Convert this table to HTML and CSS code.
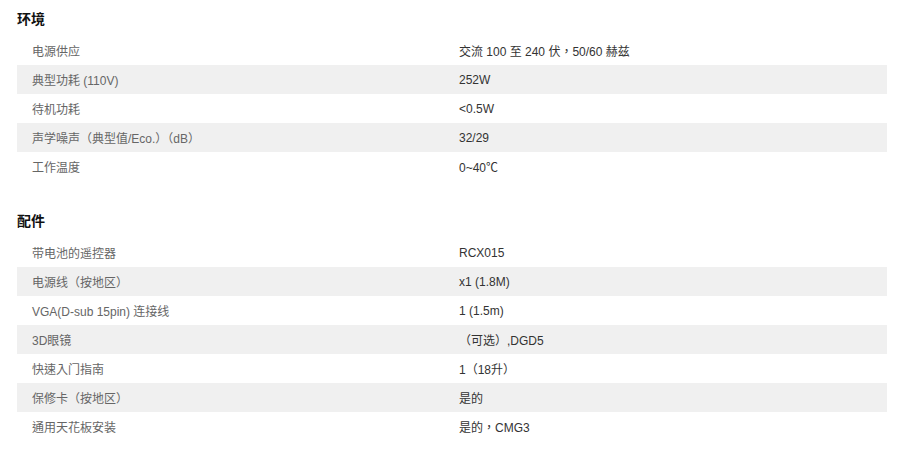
FILE: index.html
```html
<!DOCTYPE html>
<html lang="zh-TW">
<head>
<meta charset="utf-8">
<link rel="stylesheet" href="styles.css">
</head>
<body>
<div class="page">
  <section class="spec">
    <h2 class="spec-title">环境</h2>
    <div class="spec-table">
      <div class="row"><div class="label">电源供应</div><div class="value">交流 100 至 240 伏，50/60 赫兹</div></div>
      <div class="row"><div class="label">典型功耗 (110V)</div><div class="value">252W</div></div>
      <div class="row"><div class="label">待机功耗</div><div class="value">&lt;0.5W</div></div>
      <div class="row"><div class="label">声学噪声（典型值/Eco.）（dB）</div><div class="value">32/29</div></div>
      <div class="row"><div class="label">工作温度</div><div class="value">0~40℃</div></div>
    </div>
  </section>
  <section class="spec spec-next">
    <h2 class="spec-title">配件</h2>
    <div class="spec-table">
      <div class="row"><div class="label">带电池的遥控器</div><div class="value">RCX015</div></div>
      <div class="row"><div class="label">电源线（按地区）</div><div class="value">x1 (1.8M)</div></div>
      <div class="row"><div class="label">VGA(D-sub 15pin) 连接线</div><div class="value">1 (1.5m)</div></div>
      <div class="row"><div class="label">3D眼镜</div><div class="value">（可选）,DGD5</div></div>
      <div class="row"><div class="label">快速入门指南</div><div class="value">1（18升）</div></div>
      <div class="row"><div class="label">保修卡（按地区）</div><div class="value">是的</div></div>
      <div class="row"><div class="label">通用天花板安装</div><div class="value">是的，CMG3</div></div>
    </div>
  </section>
</div>
</body>
</html>
```

FILE: styles.css
```css
html, body {
  margin: 0;
  padding: 0;
  background: #fff;
}
body {
  font-family: "Liberation Sans", Arial, "Noto Sans CJK TC", sans-serif;
  font-size: 12px;
  color: #333;
}
.page {
  padding: 0 13px 0 17px;
}
.spec-title {
  margin: 0;
  height: 36px;
  line-height: 38px;
  font-size: 14px;
  font-weight: bold;
  color: #111;
}
.spec-next {
  margin-top: 21px;
}
.spec-table {
  display: flex;
  flex-direction: column;
}
.row {
  display: grid;
  grid-template-columns: 442px 1fr;
  height: 29px;
  align-items: center;
}
.row:nth-child(even) {
  background: #f0f0f0;
}
.label {
  padding-left: 15px;
  color: #666;
}
.value {
  color: #333;
}
```
